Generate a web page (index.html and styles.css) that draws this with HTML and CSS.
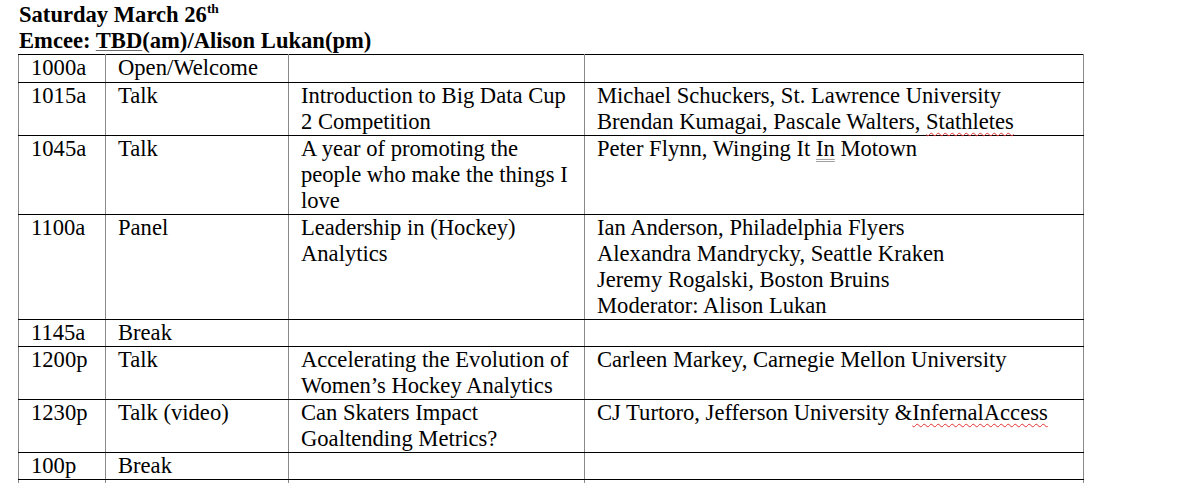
FILE: index.html
```html
<!DOCTYPE html>
<html>
<head>
<meta charset="utf-8">
<link rel="stylesheet" href="styles.css">
</head>
<body>
<div class="page">
  <div class="head">Saturday March 26<sup class="sup">th</sup></div>
  <div class="head">Emcee: <span class="gram">TBD</span>(am)/Alison Lukan(pm)</div>
  <table class="sched">
    <colgroup>
      <col class="c1"><col class="c2"><col class="c3"><col class="c4">
    </colgroup>
    <tr class="first"><td>1000a</td><td>Open/Welcome</td><td></td><td></td></tr>
    <tr><td>1015a</td><td>Talk</td><td>Introduction to Big Data Cup 2 Competition</td><td>Michael Schuckers, St. Lawrence University<br>Brendan Kumagai, Pascale Walters, <span class="spell">Stathletes</span></td></tr>
    <tr><td>1045a</td><td>Talk</td><td>A year of promoting the people who make the things I love</td><td>Peter Flynn, Winging It <span class="gram2">In</span> Motown</td></tr>
    <tr><td>1100a</td><td>Panel</td><td>Leadership in (Hockey) Analytics</td><td>Ian Anderson, Philadelphia Flyers<br>Alexandra Mandrycky, Seattle Kraken<br>Jeremy Rogalski, Boston Bruins<br>Moderator: Alison Lukan</td></tr>
    <tr><td>1145a</td><td>Break</td><td></td><td></td></tr>
    <tr><td>1200p</td><td>Talk</td><td>Accelerating the Evolution of Women’s Hockey Analytics</td><td>Carleen Markey, Carnegie Mellon University</td></tr>
    <tr><td>1230p</td><td>Talk (video)</td><td>Can Skaters Impact Goaltending Metrics?</td><td>CJ Turtoro, Jefferson University &amp;<span class="spell">InfernalAccess</span></td></tr>
    <tr><td>100p</td><td>Break</td><td></td><td></td></tr>
    <tr><td>&nbsp;</td><td></td><td></td><td></td></tr>
  </table>
</div>
</body>
</html>
```

FILE: styles.css
```css
html, body {
  margin: 0;
  padding: 0;
  background: #ffffff;
}
body {
  font-family: "Liberation Serif", "Times New Roman", serif;
  font-size: 22.6px;
  color: #000;
  overflow: hidden;
}
.page {
  padding: 2px 0 0 19px;
}
.head {
  font-weight: bold;
  line-height: 26px;
  height: 26px;
}
.sup {
  font-size: 13.5px;
  line-height: 0;
  vertical-align: 9px;
}
.gram {
  text-decoration: underline;
  text-decoration-color: #6d6d6d;
  text-underline-offset: 2px;
  text-decoration-thickness: 1px;
}
.gram2 {
  text-decoration: underline double;
  text-decoration-color: #a0a0a0;
  text-underline-offset: 3px;
  text-decoration-thickness: 1px;
}
.spell {
  text-decoration: underline wavy;
  text-decoration-color: #e23030;
  text-decoration-thickness: 1px;
  text-underline-offset: 3px;
}
.sched {
  border-collapse: collapse;
  table-layout: fixed;
  width: 1065px;
  margin-left: -1px;
}
.c1 { width: 87px; }
.c2 { width: 183px; }
.c3 { width: 296px; }
.c4 { width: 499px; }
.sched td {
  border-top: 1px solid #000;
  border-bottom: 1px solid #000;
  border-left: 1px solid #8a8a8a;
  border-right: 1px solid #8a8a8a;
  padding: 0 8px 0 12px;
  line-height: 26px;
  vertical-align: top;
  white-space: normal;
}
.first td {
  height: 27px;
}
```
